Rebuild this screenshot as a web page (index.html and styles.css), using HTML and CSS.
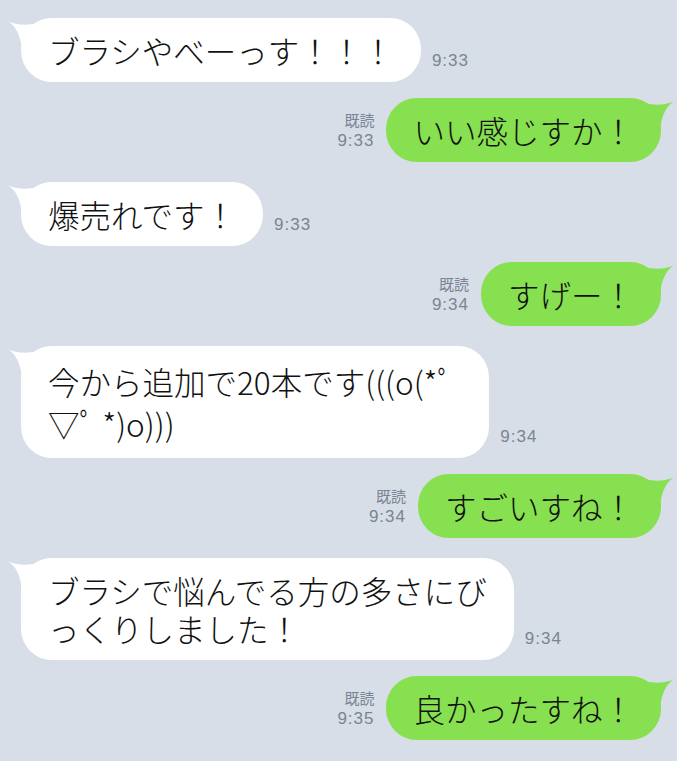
FILE: index.html
```html
<!DOCTYPE html>
<html lang="ja">
<head>
    <meta charset="UTF-8">
    <meta name="viewport" content="width=device-width, initial-scale=1.0">
    <title>トーク</title>
    <link rel="stylesheet" href="styles.css">
</head>
<body>
    <svg class="defs" width="0" height="0">
        <symbol id="tail" viewBox="0 0 40 40">
            <path d="M1 3 Q14 10 36 4 L36 32 L15 32 Q13 11 1 3 Z" fill="currentColor"/>
        </symbol>
    </svg>

    <div class="chat">
        <div class="row in">
            <div class="bubble">ブラシやべーっす！！！<svg class="tail"><use href="#tail"/></svg></div>
            <span class="time">9:33</span>
        </div>

        <div class="row out">
            <div class="meta"><span class="read">既読</span><span class="time">9:33</span></div>
            <div class="bubble">いい感じすか！<svg class="tail"><use href="#tail"/></svg></div>
        </div>

        <div class="row in">
            <div class="bubble">爆売れです！<svg class="tail"><use href="#tail"/></svg></div>
            <span class="time">9:33</span>
        </div>

        <div class="row out">
            <div class="meta"><span class="read">既読</span><span class="time">9:34</span></div>
            <div class="bubble">すげー！<svg class="tail"><use href="#tail"/></svg></div>
        </div>

        <div class="row in">
            <div class="bubble bubble-kao">今から追加で20本です(((o(*ﾟ<br>▽ﾟ *)o)))<svg class="tail"><use href="#tail"/></svg></div>
            <span class="time">9:34</span>
        </div>

        <div class="row out">
            <div class="meta"><span class="read">既読</span><span class="time">9:34</span></div>
            <div class="bubble">すごいすね！<svg class="tail"><use href="#tail"/></svg></div>
        </div>

        <div class="row in">
            <div class="bubble">ブラシで悩んでる方の多さにび<br>っくりしました！<svg class="tail"><use href="#tail"/></svg></div>
            <span class="time">9:34</span>
        </div>

        <div class="row out">
            <div class="meta"><span class="read">既読</span><span class="time">9:35</span></div>
            <div class="bubble">良かったすね！<svg class="tail"><use href="#tail"/></svg></div>
        </div>
    </div>
</body>
</html>
```

FILE: styles.css
```css
/* トーク画面 */
body {
    margin: 0;
    padding: 0;
    background: #d7dee7;
    font-family: "Noto Sans CJK JP", "Noto Sans", sans-serif;
    color: #111;
}

.defs {
    position: absolute;
    width: 0;
    height: 0;
}

.chat {
    padding: 18px 16px 0 21px;
}

.row {
    display: flex;
    align-items: flex-end;
}

.row.in {
    margin-top: 20px;
}

.row.in:first-child {
    margin-top: 0;
}

.row.out {
    justify-content: flex-end;
    margin-top: 16px;
}

.bubble {
    position: relative;
    background: #fff;
    font-size: 31.5px;
    font-weight: 300;
    line-height: 38px;
    padding: 13px 27px;
    border-radius: 31px;
    white-space: nowrap;
}

.bubble-kao {
    line-height: 42px;
    padding: 14px 36px 14px 27px;
}

.out .bubble {
    background: #86e04f;
}

.tail {
    position: absolute;
    top: 0;
    left: -14px;
    width: 40px;
    height: 40px;
    color: #fff;
}

.out .tail {
    left: auto;
    right: -14px;
    transform: scaleX(-1);
    color: #86e04f;
}

.time {
    font-family: "Liberation Sans", Arial, sans-serif;
    font-size: 17px;
    letter-spacing: 1px;
    line-height: 21px;
    color: #7a8494;
}

.in .time {
    margin: 0 0 11px 11px;
}

.meta {
    display: flex;
    flex-direction: column;
    align-items: flex-end;
    margin: 0 12px 11px 0;
}

.read {
    font-size: 15px;
    line-height: 21px;
    color: #7a8494;
}
```
